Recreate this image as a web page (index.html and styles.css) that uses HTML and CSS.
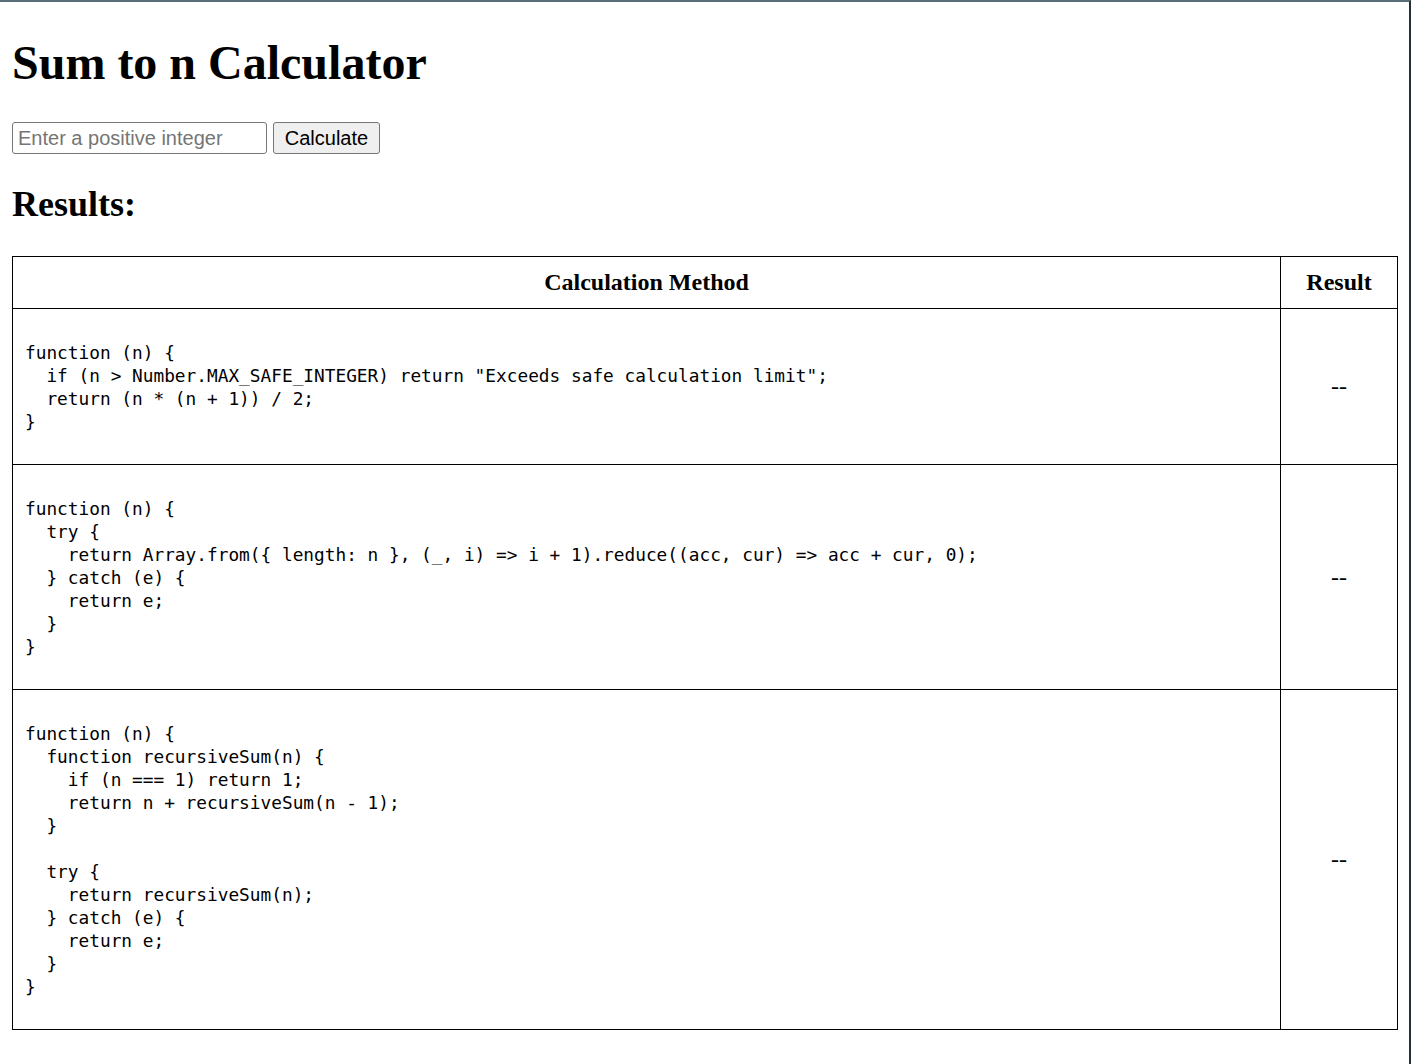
FILE: index.html
```html
<!DOCTYPE html>
<html lang="en">
<head>
<meta charset="utf-8">
<title>Sum to n Calculator</title>
<link rel="stylesheet" href="styles.css">
</head>
<body>
<h1 class="title">Sum to n Calculator</h1>
<div class="controls">
  <input class="num-input" type="number" placeholder="Enter a positive integer">
  <button class="calc-btn" type="button">Calculate</button>
</div>
<h2 class="subtitle">Results:</h2>
<table class="results">
  <thead>
    <tr>
      <th class="col-method">Calculation Method</th>
      <th class="col-result">Result</th>
    </tr>
  </thead>
  <tbody>
    <tr>
      <td class="method"><pre class="code">function (n) {
  if (n &gt; Number.MAX_SAFE_INTEGER) return "Exceeds safe calculation limit";
  return (n * (n + 1)) / 2;
}</pre></td>
      <td class="result">--</td>
    </tr>
    <tr>
      <td class="method"><pre class="code">function (n) {
  try {
    return Array.from({ length: n }, (_, i) =&gt; i + 1).reduce((acc, cur) =&gt; acc + cur, 0);
  } catch (e) {
    return e;
  }
}</pre></td>
      <td class="result">--</td>
    </tr>
    <tr>
      <td class="method"><pre class="code">function (n) {
  function recursiveSum(n) {
    if (n === 1) return 1;
    return n + recursiveSum(n - 1);
  }

  try {
    return recursiveSum(n);
  } catch (e) {
    return e;
  }
}</pre></td>
      <td class="result">--</td>
    </tr>
  </tbody>
</table>
</body>
</html>
```
FILE: styles.css
```css
html {
  border-top: 2px solid #5b6d78;
  border-right: 2px solid #263034;
  min-height: 100%;
  box-sizing: border-box;
  background: #fff;
}

body {
  margin: 12px 11px 12px 12px;
  font-family: "Liberation Serif", "Times New Roman", serif;
  color: #000;
}

.title {
  font-size: 48px;
  font-weight: bold;
  margin: 21px 0 32px;
  line-height: 55px;
}

.controls {
  display: flex;
  align-items: center;
  gap: 6px;
}

.num-input {
  box-sizing: border-box;
  width: 255px;
  height: 32px;
  border: 1px solid #767676;
  border-radius: 3px;
  padding: 1px 5px;
  font-family: "Liberation Sans", Arial, sans-serif;
  font-size: 20px;
  color: #000;
  background: #fff;
  -moz-appearance: textfield;
}

.num-input::-webkit-outer-spin-button,
.num-input::-webkit-inner-spin-button {
  -webkit-appearance: none;
  margin: 0;
}

.num-input::placeholder {
  color: #757575;
}

.calc-btn {
  box-sizing: border-box;
  height: 32px;
  width: 107px;
  border: 1px solid #767676;
  border-radius: 3px;
  background: #efefef;
  padding: 1px 9px;
  font-family: "Liberation Sans", Arial, sans-serif;
  font-size: 20px;
  color: #000;
}

.subtitle {
  font-size: 36px;
  font-weight: bold;
  margin: 30px 0 31px;
  line-height: 41px;
}

.results {
  width: 100%;
  border-collapse: collapse;
  border: 1px solid #000;
}

.results th,
.results td {
  border: 1px solid #000;
  padding: 12px;
}

.results th {
  font-size: 24px;
  font-weight: bold;
  line-height: 27px;
  text-align: center;
}

.col-result {
  width: 92px;
}

.method {
  text-align: left;
  vertical-align: middle;
}

.code {
  margin: 19.5px 0;
  font-family: "DejaVu Sans Mono", "Liberation Mono", monospace;
  font-size: 17.8px;
  line-height: 23px;
  white-space: pre;
}

.result {
  text-align: center;
  vertical-align: middle;
  font-size: 24px;
}
```
